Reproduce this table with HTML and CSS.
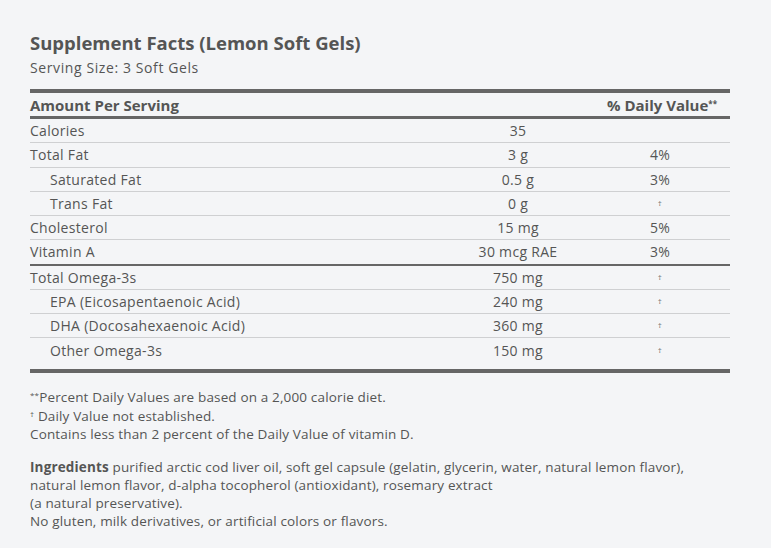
FILE: index.html
```html
<!DOCTYPE html>
<html>
<head>
<meta charset="utf-8">
<link rel="stylesheet" href="styles.css">
</head>
<body>
<div class="panel">
  <h1 class="title">Supplement Facts (Lemon Soft Gels)</h1>
  <p class="serving">Serving Size: 3 Soft Gels</p>
  <table class="facts">
    <colgroup>
      <col class="w-name">
      <col class="w-amt">
      <col class="w-dv">
    </colgroup>
    <thead>
      <tr class="head">
        <th class="c-name">Amount Per Serving</th>
        <th class="c-amt"></th>
        <th class="c-dv">% Daily Value<sup>**</sup></th>
      </tr>
    </thead>
    <tbody>
      <tr><td class="c-name">Calories</td><td class="c-amt">35</td><td class="c-dv"></td></tr>
      <tr><td class="c-name">Total Fat</td><td class="c-amt">3 g</td><td class="c-dv">4%</td></tr>
      <tr><td class="c-name sub">Saturated Fat</td><td class="c-amt">0.5 g</td><td class="c-dv">3%</td></tr>
      <tr><td class="c-name sub">Trans Fat</td><td class="c-amt">0 g</td><td class="c-dv"><span class="dag">†</span></td></tr>
      <tr><td class="c-name">Cholesterol</td><td class="c-amt">15 mg</td><td class="c-dv">5%</td></tr>
      <tr class="group-end"><td class="c-name">Vitamin A</td><td class="c-amt">30 mcg RAE</td><td class="c-dv">3%</td></tr>
      <tr><td class="c-name">Total Omega-3s</td><td class="c-amt">750 mg</td><td class="c-dv"><span class="dag">†</span></td></tr>
      <tr><td class="c-name sub">EPA (Eicosapentaenoic Acid)</td><td class="c-amt">240 mg</td><td class="c-dv"><span class="dag">†</span></td></tr>
      <tr><td class="c-name sub">DHA (Docosahexaenoic Acid)</td><td class="c-amt">360 mg</td><td class="c-dv"><span class="dag">†</span></td></tr>
      <tr class="last"><td class="c-name sub">Other Omega-3s</td><td class="c-amt">150 mg</td><td class="c-dv"><span class="dag">†</span></td></tr>
    </tbody>
  </table>
  <div class="notes">
    <p><sup>**</sup>Percent Daily Values are based on a 2,000 calorie diet.</p>
    <p><sup>†</sup> Daily Value not established.</p>
    <p>Contains less than 2 percent of the Daily Value of vitamin D.</p>
  </div>
  <div class="ingredients">
    <p><strong>Ingredients</strong> purified arctic cod liver oil, soft gel capsule (gelatin, glycerin, water, natural lemon flavor),<br>natural lemon flavor, d-alpha tocopherol (antioxidant), rosemary extract<br>(a natural preservative).</p>
    <p>No gluten, milk derivatives, or artificial colors or flavors.</p>
  </div>
</div>
</body>
</html>
```

FILE: styles.css
```css
html, body {
  margin: 0;
  padding: 0;
  background: #f4f5f7;
}
body {
  font-family: "Open Sans", Lato, sans-serif;
  color: #555555;
}
.panel {
  padding: 31px 41px 0 30px;
}
.title {
  margin: 0;
  font-size: 18.5px;
  font-weight: 700;
  line-height: 24px;
  color: #555555;
}
.serving {
  margin: 4px 0 0;
  font-size: 14px;
  letter-spacing: 0.6px;
  line-height: 18px;
}
.facts {
  margin-top: 12px;
  width: 700px;
  table-layout: fixed;
  border-collapse: collapse;
  border-top: 4px solid #666666;
  border-bottom: 4px solid #666666;
  font-size: 14px;
  letter-spacing: 0.3px;
}
.w-name { width: 416px; }
.w-amt { width: 144px; }
.w-dv { width: 140px; }
.facts th, .facts td {
  padding: 0;
  height: 23.25px;
}
.head th {
  height: 23px;
  font-size: 15px;
  letter-spacing: 0;
  font-weight: 700;
  border-bottom: 3px solid #666666;
  vertical-align: middle;
}
.c-name {
  text-align: left;
}
.c-amt {
  text-align: center;
}
.c-dv {
  text-align: center;
}
.head .c-dv {
  text-align: right;
  padding-right: 13px;
}
.facts sup {
  font-size: 8px;
  vertical-align: 4px;
  line-height: 0;
}
.facts tbody td {
  border-bottom: 1px solid #cfd0d2;
}
.facts tbody tr.group-end td {
  border-bottom: 2px solid #666666;
}
.facts tbody tr.last td {
  border-bottom: none;
  height: 28px;
  vertical-align: top;
  padding-top: 3px;
}
.sub {
  padding-left: 20px !important;
}
.dag {
  font-size: 8px;
  color: #6f6f6f;
  vertical-align: 3px;
}
.notes {
  margin-top: 15px;
  font-size: 13.5px;
  letter-spacing: 0.15px;
  line-height: 18.5px;
}
.notes p, .ingredients p {
  margin: 0;
}
.notes sup {
  font-size: 8px;
  vertical-align: 4px;
  line-height: 0;
}
.ingredients {
  margin-top: 14px;
  font-size: 13.5px;
  letter-spacing: 0.15px;
  line-height: 18px;
}
.ingredients strong {
  font-weight: 700;
}
```
